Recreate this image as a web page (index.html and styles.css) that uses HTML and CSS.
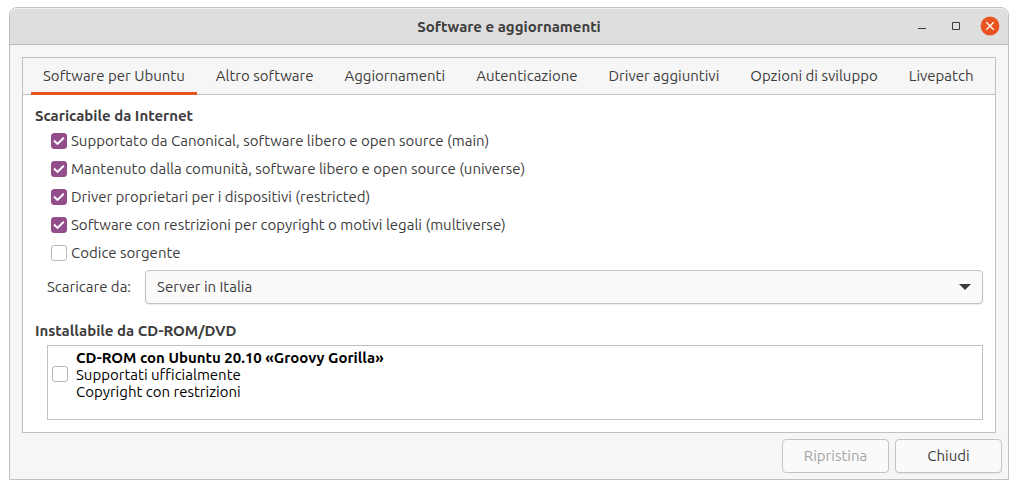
FILE: index.html
```html
<!DOCTYPE html>
<html lang="it">
<head>
<meta charset="utf-8">
<meta name="viewport" content="width=device-width, initial-scale=1">
<title>Software e aggiornamenti</title>
<link rel="stylesheet" href="styles.css">
</head>
<body>
<main class="window">
  <header class="titlebar">
    <h1 class="title">Software e aggiornamenti</h1>
    <div class="controls">
      <button class="control" type="button" aria-label="Minimizza">
        <svg width="20" height="20" viewBox="0 0 20 20" aria-hidden="true"><path d="M6 12h8v1H6z" fill="#3d3d3d"/></svg>
      </button>
      <button class="control" type="button" aria-label="Massimizza">
        <svg width="20" height="20" viewBox="0 0 20 20" aria-hidden="true"><path d="M6.500 6.500h7v7h-7z" fill="none" stroke="#3d3d3d"/></svg>
      </button>
      <button class="control" type="button" aria-label="Chiudi finestra">
        <svg width="20" height="20" viewBox="0 0 20 20" aria-hidden="true"><circle cx="10" cy="10" r="9.400" fill="#e95420"/><path d="M6.300 6.300l7.400 7.400M13.700 6.300l-7.400 7.400" stroke="#fff" stroke-width="1.300"/></svg>
      </button>
    </div>
  </header>

  <div class="body">
    <section class="notebook">
      <div class="tabs" role="tablist">
        <button class="tab tab-active" type="button" role="tab" aria-selected="true" aria-controls="panel">Software per Ubuntu</button>
        <button class="tab" type="button" role="tab" aria-selected="false">Altro software</button>
        <button class="tab" type="button" role="tab" aria-selected="false">Aggiornamenti</button>
        <button class="tab" type="button" role="tab" aria-selected="false">Autenticazione</button>
        <button class="tab" type="button" role="tab" aria-selected="false">Driver aggiuntivi</button>
        <button class="tab" type="button" role="tab" aria-selected="false">Opzioni di sviluppo</button>
        <button class="tab" type="button" role="tab" aria-selected="false">Livepatch</button>
      </div>

      <div class="panel" id="panel" role="tabpanel">
        <h2 class="heading">Scaricabile da Internet</h2>
        <div class="sources">
          <label class="source"><input class="check" type="checkbox" checked>Supportato da Canonical, software libero e open source (main)</label>
          <label class="source"><input class="check" type="checkbox" checked>Mantenuto dalla comunità, software libero e open source (universe)</label>
          <label class="source"><input class="check" type="checkbox" checked>Driver proprietari per i dispositivi (restricted)</label>
          <label class="source"><input class="check" type="checkbox" checked>Software con restrizioni per copyright o motivi legali (multiverse)</label>
          <label class="source"><input class="check" type="checkbox">Codice sorgente</label>
        </div>
        <div class="server">
          <label class="server-label" for="server">Scaricare da:</label>
          <div class="combo">
            <select class="select" id="server"><option>Server in Italia</option></select>
            <svg class="arrow" width="12" height="6" viewBox="0 0 12 6" aria-hidden="true"><path d="M0 0h12L6 6z" fill="#3d3d3d"/></svg>
          </div>
        </div>

        <h2 class="heading heading-cd">Installabile da CD-ROM/DVD</h2>
        <div class="list">
          <label class="disc">
            <input class="check" type="checkbox">
            <span class="disc-text"><strong>CD-ROM con Ubuntu 20.10 «Groovy Gorilla»</strong><span>Supportati ufficialmente</span><span>Copyright con restrizioni</span></span>
          </label>
        </div>
      </div>
    </section>
  </div>

  <footer class="actions">
    <button class="button" type="button" disabled>Ripristina</button>
    <button class="button" type="button">Chiudi</button>
  </footer>
</main>
</body>
</html>
```
FILE: styles.css
```css
* {
  box-sizing: border-box;
}

body {
  margin: 7px 9px 9px;
  background: #fff;
  color: #3d3d3d;
  font: 15px/18px "Ubuntu", "Noto Sans", sans-serif;
}

button,
select {
  font: inherit;
  color: inherit;
}

.window {
  border: 1px solid #c0c0c0;
  border-radius: 8px 8px 0 0;
  background: #f6f6f6;
}

.titlebar {
  display: grid;
  grid-template-columns: 1fr auto 1fr;
  align-items: center;
  height: 37px;
  padding: 0 8px;
  border-bottom: 1px solid #bababa;
  border-radius: 7px 7px 0 0;
  background: #dedede;
  box-shadow: inset 0 1px #f0f0f0;
}

.title {
  grid-column: 2;
  margin: 0;
  padding-top: 2px;
  font-size: 15px;
  line-height: 18px;
}

.controls {
  display: flex;
  justify-content: flex-end;
  gap: 14px;
}

.control {
  width: 20px;
  height: 20px;
  padding: 0;
  border: 0;
  background: none;
}

.control svg {
  display: block;
}

.body {
  padding: 12px 12px 6px;
}

.notebook {
  border: 1px solid #c0c0c0;
  background: #fff;
}

.tabs {
  display: flex;
  gap: 7px;
  padding: 0 8px;
  border-bottom: 1px solid #c0c0c0;
  background: #f6f6f6;
}

.tab {
  height: 37px;
  margin-bottom: -1px;
  padding: 0 12px 2px;
  border: 0;
  background: none;
  white-space: nowrap;
}

.tab-active {
  box-shadow: inset 0 -3px #e95420;
}

.panel {
  padding: 12px;
}

.heading {
  margin: 0 0 2px;
  font-size: 15px;
  line-height: 18px;
}

.heading-cd {
  margin: 18px 0 5px;
}

.sources {
  padding-left: 16px;
}

.source {
  display: flex;
  align-items: center;
  gap: 4px;
  height: 28px;
}

.check {
  appearance: none;
  flex: none;
  width: 16px;
  height: 16px;
  margin: 0;
  border: 1px solid #b8b8b8;
  border-radius: 3px;
  background: #fff;
}

.check:checked {
  border-color: #924d8b;
  background: #924d8b url("data:image/svg+xml,%3Csvg xmlns='http://www.w3.org/2000/svg' viewBox='0 0 14 14'%3E%3Cpath d='M2 6.500l3.500 3.500 6.300-6.200' fill='none' stroke='white' stroke-width='1.900'/%3E%3C/svg%3E") center / 14px 14px no-repeat;
}

.server {
  display: flex;
  align-items: center;
  gap: 14px;
  margin-top: 3px;
  padding-left: 12px;
}

.combo {
  position: relative;
  flex: 1;
}

.select {
  appearance: none;
  display: block;
  width: 100%;
  height: 34px;
  padding: 0 32px 0 11px;
  border: 1px solid #c3c3c3;
  border-radius: 4px;
  background: #fafafa;
  box-shadow: 0 1px 1px #ececec;
}

.arrow {
  position: absolute;
  top: 14px;
  right: 12px;
  pointer-events: none;
}

.list {
  min-height: 75px;
  margin-left: 12px;
  padding: 1px 4px;
  border: 1px solid #c0c0c0;
}

.disc {
  display: flex;
  align-items: center;
  gap: 8px;
  color: #000;
  line-height: 17px;
}

.disc-text {
  display: grid;
  padding-top: 2px;
}

.actions {
  display: flex;
  justify-content: flex-end;
  gap: 6px;
  padding: 0 6px 6px;
}

.button {
  width: 107px;
  height: 34px;
  border: 1px solid #c3c3c3;
  border-radius: 4px;
  background: #fafafa;
  box-shadow: 0 1px 1px #e8e8e8;
}

.button:disabled {
  color: #a3a3a3;
  box-shadow: none;
}
```
